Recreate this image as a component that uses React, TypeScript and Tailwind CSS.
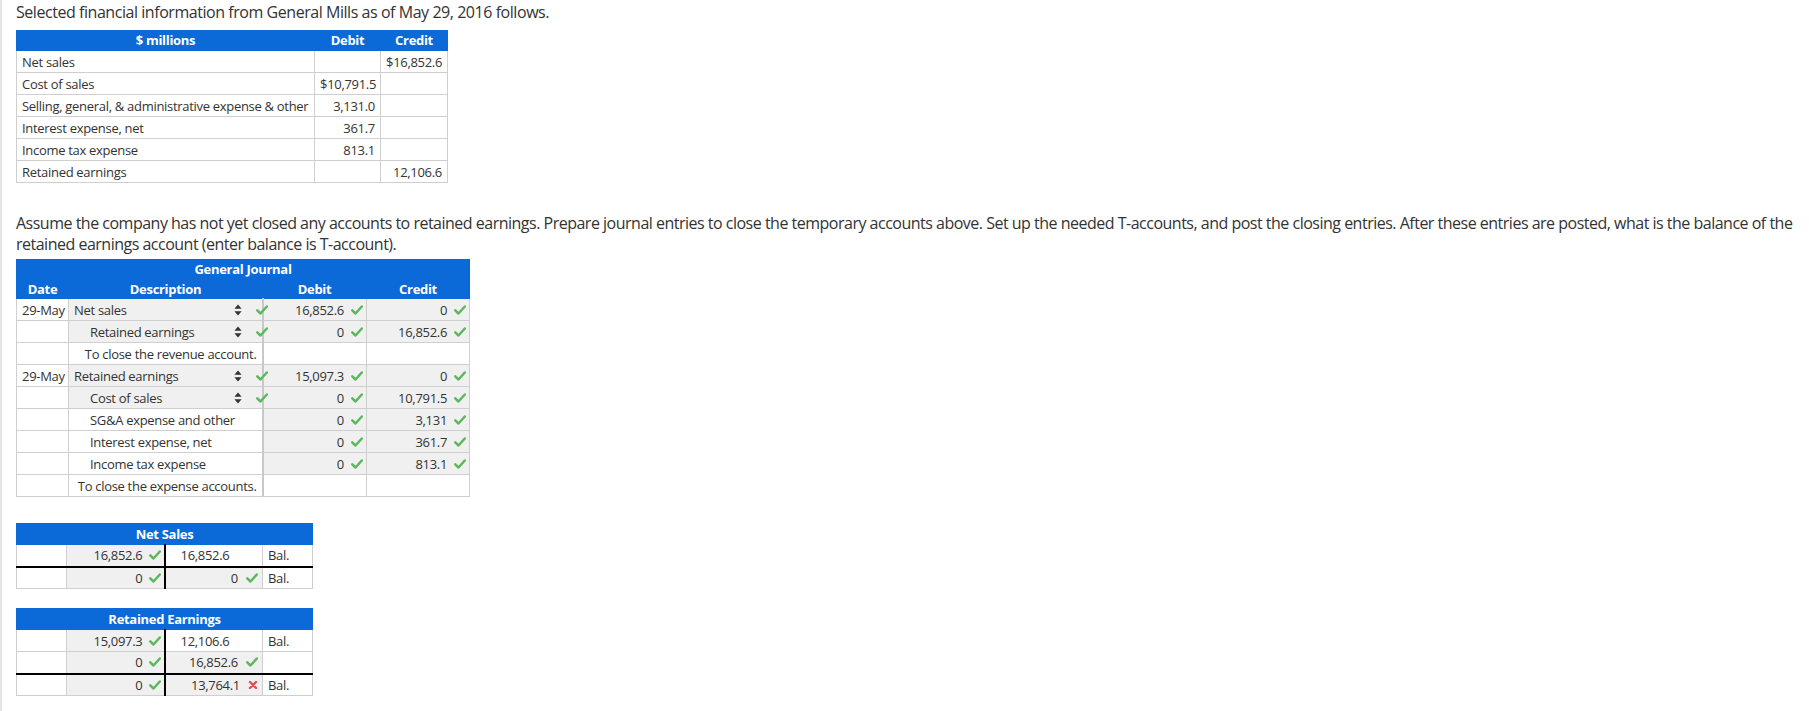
import React from "react";

const BLUE = "bg-[#0b69d8]";

const Check = () => (
    <svg width="12" height="10" viewBox="0 0 12 10" className="shrink-0">
        <path
            d="M1.3 5.4 L4.5 8.5 L10.8 1.5"
            fill="none"
            stroke="#5cb85c"
            strokeWidth="2.5"
            strokeLinecap="round"
            strokeLinejoin="round"
        />
    </svg>
);

const Cross = () => (
    <svg width="10" height="10" viewBox="0 0 10 10" className="shrink-0">
        <path
            d="M2 2 L8 8 M8 2 L2 8"
            fill="none"
            stroke="#e05050"
            strokeWidth="2.4"
            strokeLinecap="round"
        />
    </svg>
);

const SortArrows = () => (
    <svg width="8" height="12" viewBox="0 0 8 12" className="shrink-0">
        <path d="M4 0.5 L7.6 4.8 H0.4 Z M4 11.5 L7.6 7.2 H0.4 Z" fill="#333" />
    </svg>
);

// --- DATA ---
const givenRows = [
    { name: "Net sales", debit: "", credit: "$16,852.6" },
    { name: "Cost of sales", debit: "$10,791.5", credit: "" },
    { name: "Selling, general, & administrative expense & other", debit: "3,131.0", credit: "" },
    { name: "Interest expense, net", debit: "361.7", credit: "" },
    { name: "Income tax expense", debit: "813.1", credit: "" },
    { name: "Retained earnings", debit: "", credit: "12,106.6" },
];

type JournalRow =
    | { memo: string }
    | {
          date?: string;
          desc: string;
          indent?: boolean;
          select?: boolean;
          debit: string;
          credit: string;
      };

const journalRows: JournalRow[] = [
    { date: "29-May", desc: "Net sales", select: true, debit: "16,852.6", credit: "0" },
    { desc: "Retained earnings", indent: true, select: true, debit: "0", credit: "16,852.6" },
    { memo: "To close the revenue account." },
    { date: "29-May", desc: "Retained earnings", select: true, debit: "15,097.3", credit: "0" },
    { desc: "Cost of sales", indent: true, select: true, debit: "0", credit: "10,791.5" },
    { desc: "SG&A expense and other", indent: true, debit: "0", credit: "3,131" },
    { desc: "Interest expense, net", indent: true, debit: "0", credit: "361.7" },
    { desc: "Income tax expense", indent: true, debit: "0", credit: "813.1" },
    { memo: "To close the expense accounts." },
];

type TCell = { value: string; mark?: "check" | "cross"; plain?: boolean } | null;
type TRow = { left: TCell; right: TCell; bal: boolean; ruled?: boolean };

const netSalesRows: TRow[] = [
    { left: { value: "16,852.6", mark: "check" }, right: { value: "16,852.6", plain: true }, bal: true },
    { left: { value: "0", mark: "check" }, right: { value: "0", mark: "check" }, bal: true, ruled: true },
];

const retainedRows: TRow[] = [
    { left: { value: "15,097.3", mark: "check" }, right: { value: "12,106.6", plain: true }, bal: true },
    { left: { value: "0", mark: "check" }, right: { value: "16,852.6", mark: "check" }, bal: false },
    { left: { value: "0", mark: "check" }, right: { value: "13,764.1", mark: "cross" }, bal: true, ruled: true },
];

const cell = "border border-[#cfcfcf] h-[22px] p-0 leading-[20px] whitespace-nowrap";
const head = "p-0 text-center border border-[#0b69d8] whitespace-nowrap";

const NumCell = ({ value }: { value: string }) => (
    <td className={`${cell} bg-[#f0f0f0]`}>
        <div className="flex items-center justify-end gap-[7px] pr-[3px]">
            <span>{value}</span>
            <Check />
        </div>
    </td>
);

const TAccount = ({ title, rows }: { title: string; rows: TRow[] }) => (
    <table className="table-fixed w-[296px] text-[13px] tracking-[-0.3px]">
        <colgroup>
            <col className="w-[50px]" />
            <col className="w-[98px]" />
            <col className="w-[98px]" />
            <col className="w-[50px]" />
        </colgroup>
        <thead>
            <tr className={`${BLUE} text-white font-bold`}>
                <th colSpan={4} className={`${head} h-[20px] leading-[20px]`}>
                    {title}
                </th>
            </tr>
        </thead>
        <tbody>
            {rows.map((r, i) => {
                const top = r.ruled ? "border-t-2 border-t-black" : "";
                return (
                    <tr key={i}>
                        <td className={`${cell} ${top}`} />
                        <td className={`${cell} ${top} bg-[#f0f0f0] border-r-2 border-r-black`}>
                            {r.left && (
                                <div className="flex items-center justify-end gap-[6px] pr-[3px]">
                                    <span>{r.left.value}</span>
                                    <Check />
                                </div>
                            )}
                        </td>
                        {r.right && r.right.plain ? (
                            <td className={`${cell} ${top} pl-[15px]`}>{r.right.value}</td>
                        ) : (
                            <td className={`${cell} ${top} bg-[#f0f0f0]`}>
                                {r.right && (
                                    <div className="flex items-center justify-end gap-[8px] pr-[4px]">
                                        <span>{r.right.value}</span>
                                        {r.right.mark === "cross" ? <Cross /> : <Check />}
                                    </div>
                                )}
                            </td>
                        )}
                        <td className={`${cell} ${top} pl-[5px]`}>{r.bal ? "Bal." : ""}</td>
                    </tr>
                );
            })}
        </tbody>
    </table>
);

export default function App() {
    return (
        <div className="min-h-screen w-full bg-white border-l-2 border-[#e4e4e4] pl-[14px] pr-[8px] text-[#333] font-['Open_Sans',sans-serif]">
            <p className="text-[16px] leading-[24px] tracking-[-0.45px]">
                Selected financial information from General Mills as of May 29, 2016 follows.
            </p>

            {/* GIVEN DATA */}
            <table className="table-fixed w-[431px] mt-[6px] text-[13px] tracking-[-0.3px]">
                <colgroup>
                    <col className="w-[298px]" />
                    <col className="w-[66px]" />
                    <col className="w-[67px]" />
                </colgroup>
                <thead>
                    <tr className={`${BLUE} text-white font-bold`}>
                        <th className={`${head} h-[19px] leading-[19px]`}>$ millions</th>
                        <th className={`${head} h-[19px] leading-[19px]`}>Debit</th>
                        <th className={`${head} h-[19px] leading-[19px]`}>Credit</th>
                    </tr>
                </thead>
                <tbody>
                    {givenRows.map((r) => (
                        <tr key={r.name}>
                            <td className={`${cell} px-[5px]`}>{r.name}</td>
                            <td className={`${cell} px-[5px] text-right`}>{r.debit}</td>
                            <td className={`${cell} px-[5px] text-right`}>{r.credit}</td>
                        </tr>
                    ))}
                </tbody>
            </table>

            <p className="mt-[30px] text-[16px] leading-[21px] tracking-[-0.5px]">
                Assume the company has not yet closed any accounts to retained earnings. Prepare journal entries to
                close the temporary accounts above. Set up the needed T-accounts, and post the closing entries. After
                these entries are posted, what is the balance of the retained earnings account (enter balance is
                T-account).
            </p>

            {/* GENERAL JOURNAL */}
            <table className="table-fixed w-[453px] mt-[4px] text-[13px] tracking-[-0.3px]">
                <colgroup>
                    <col className="w-[52px]" />
                    <col className="w-[194px]" />
                    <col className="w-[104px]" />
                    <col className="w-[103px]" />
                </colgroup>
                <thead className={`${BLUE} text-white font-bold`}>
                    <tr>
                        <th colSpan={4} className={`${head} h-[19px] leading-[19px]`}>
                            General Journal
                        </th>
                    </tr>
                    <tr>
                        <th className={`${head} h-[19px] leading-[18px] align-bottom`}>Date</th>
                        <th className={`${head} h-[19px] leading-[18px] align-bottom`}>Description</th>
                        <th className={`${head} h-[19px] leading-[18px] align-bottom`}>Debit</th>
                        <th className={`${head} h-[19px] leading-[18px] align-bottom`}>Credit</th>
                    </tr>
                </thead>
                <tbody>
                    {journalRows.map((r, i) => {
                        if ("memo" in r) {
                            return (
                                <tr key={i}>
                                    <td className={cell} />
                                    <td className={`${cell} border-r-2 border-r-[#c8c8c8] text-right pr-[5px]`}>
                                        {r.memo}
                                    </td>
                                    <td className={cell} />
                                    <td className={cell} />
                                </tr>
                            );
                        }
                        return (
                            <tr key={i}>
                                <td className={`${cell} pl-[5px]`}>{r.date ?? ""}</td>
                                <td
                                    className={`${cell} border-r-2 border-r-[#c8c8c8] ${
                                        r.select ? "bg-[#f0f0f0]" : ""
                                    } ${r.indent ? "pl-[21px]" : "pl-[5px]"}`}
                                >
                                    <div className="flex items-center">
                                        <span className="flex-1">{r.desc}</span>
                                        {r.select && (
                                            <div className="flex items-center gap-[14px] -mr-[6px]">
                                                <SortArrows />
                                                <Check />
                                            </div>
                                        )}
                                    </div>
                                </td>
                                <NumCell value={r.debit} />
                                <NumCell value={r.credit} />
                            </tr>
                        );
                    })}
                </tbody>
            </table>

            {/* T-ACCOUNTS */}
            <div className="mt-[26px] flex flex-col gap-[19px]">
                <TAccount title="Net Sales" rows={netSalesRows} />
                <TAccount title="Retained Earnings" rows={retainedRows} />
            </div>
        </div>
    );
}
